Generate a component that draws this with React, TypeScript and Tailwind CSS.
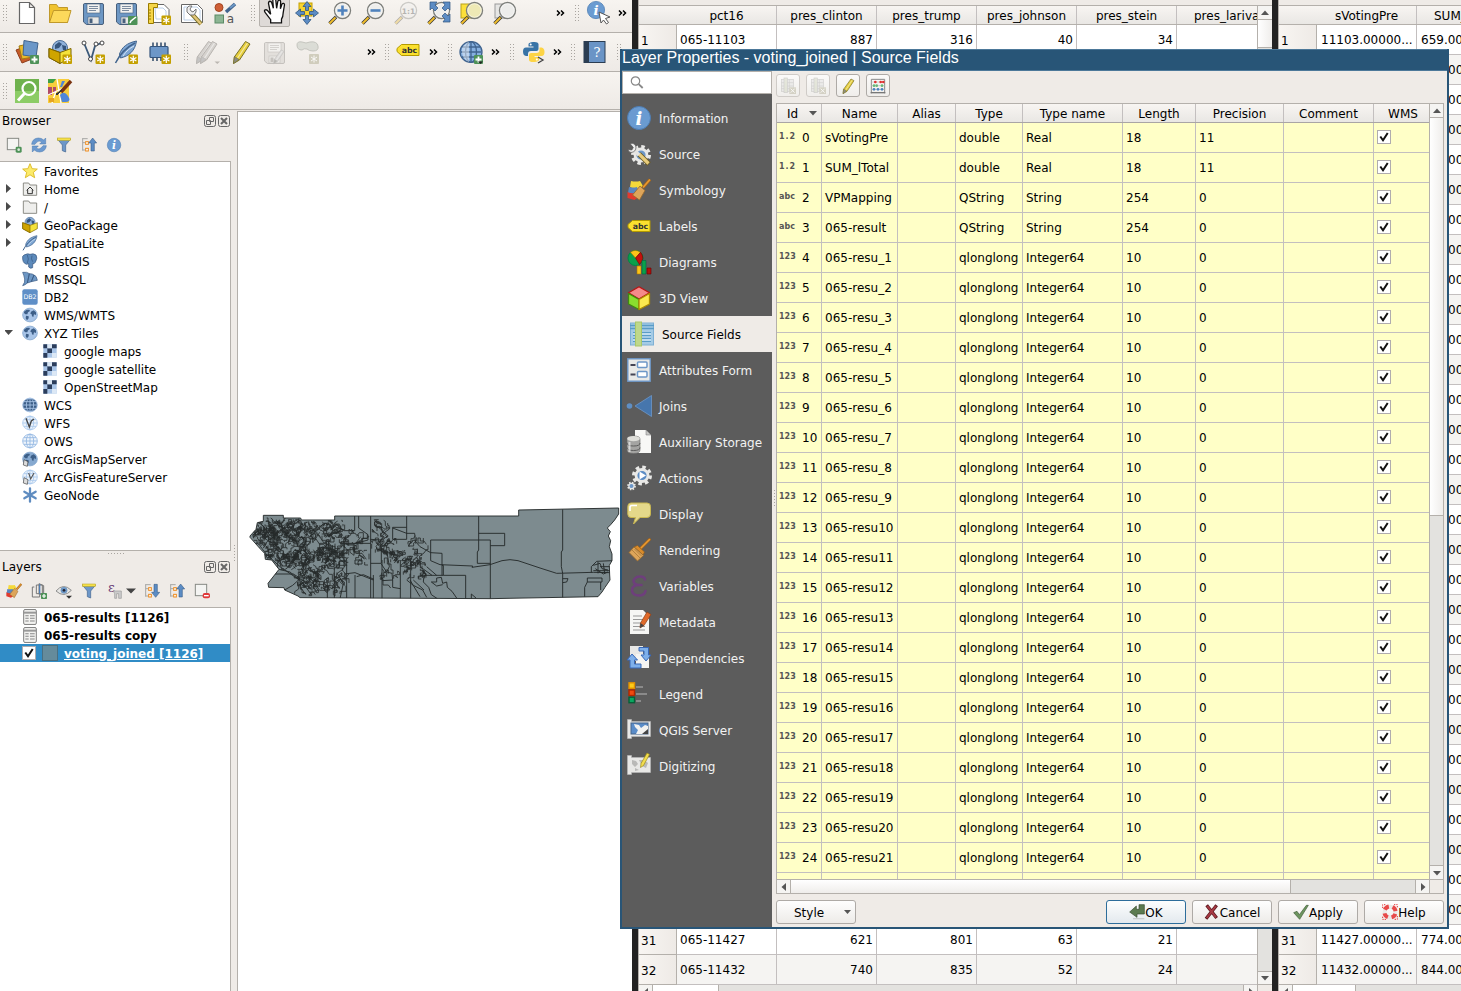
import type { ReactNode } from 'react';

/* ---------- shared drawing helpers ---------- */

function Ic({ s = 24, vb = '0 0 24 24', children }: { s?: number; vb?: string; children: ReactNode }) {
  return (
    <svg width={s} height={s} viewBox={vb} className="block shrink-0 overflow-visible" fill="none">
      {children}
    </svg>
  );
}

const Badge = () => (
  <g>
    <rect x="14.500" y="14.500" width="9.500" height="9.500" rx="1" fill="#c4a000" />
    <path d="M19.300 15.700v7.200M16.200 17.500l6.200 3.600M22.400 17.500l-6.200 3.600" stroke="#fff" strokeWidth="1.200" />
  </g>
);
const PlusBadge = () => (
  <g>
    <rect x="15" y="15" width="9" height="9" rx="1" fill="#4e9258" />
    <path d="M19.500 16.500v6M16.500 19.500h6" stroke="#fff" strokeWidth="1.800" />
  </g>
);
const Lens = ({ fill = '#eeeeec' }: { fill?: string }) => (
  <g>
    <path d="M8 16L1.500 22.500" stroke="#333" strokeWidth="3.400" />
    <path d="M7.500 16.500L1.500 22.500" stroke="#f0bd2c" strokeWidth="2" />
    <circle cx="14.500" cy="9.500" r="8" fill={fill} stroke="#7d7f7b" strokeWidth="1.400" />
    <circle cx="14.500" cy="9.500" r="6.800" stroke="#fff" strokeOpacity=".7" strokeWidth=".8" />
  </g>
);
const Floppy = ({ c = '#6d97c4', d = '#48607c' }: { c?: string; d?: string }) => (
  <g>
    <path d="M3.500 2.500h17.500q1.500 0 1.500 1.500v18q0 1.500-1.500 1.500h-15.500l-3-2.500v-17q0-1.500 1-1.500z" fill={c} stroke={d} />
    <rect x="6" y="3" width="13" height="9" fill="#f2f2f0" stroke={d} strokeWidth=".6" />
    <path d="M8 5.500h9M8 7.500h9M8 9.500h7" stroke={d} strokeWidth="1" strokeOpacity=".7" />
    <rect x="7" y="16" width="11" height="7" fill="#e8e8e6" stroke={d} strokeWidth=".6" />
    <rect x="8.500" y="17.500" width="3" height="4.500" fill={d} />
  </g>
);
const Pencil = ({ c = '#e7cf3c', d = '#77702a', g = '#8b8b85' }: { c?: string; d?: string; g?: string }) => (
  <g>
    <path d="M16.500 1.500l4.500 2.500L10.500 20l-6 3.500.8-6.500z" fill={c} stroke={d} strokeWidth="1" />
    <path d="M18.500 3L8 19" stroke="#fff" strokeOpacity=".55" strokeWidth="1.200" />
    <path d="M5.500 16.500l4.500 3-5.500 4z" fill={g} stroke={d} strokeWidth=".6" />
  </g>
);
const Globe = ({ bg = '#a9c5e8', land = '#3d5f88' }: { bg?: string; land?: string }) => (
  <g>
    <ellipse cx="12" cy="12" rx="11" ry="10.300" fill={bg} stroke="#7fa3cc" strokeWidth="1.200" />
    <path d="M3 7l4-3 4 0 1 2-3 2-1 3-3 0-2-2zM13.500 7l4-2 3.500 3 0 4-3-1-1 4-2-1-.5-3-2-1zM6 13l4 1 0 3-2.500 3-2-3z" fill={land} />
  </g>
);
const WireGlobe = ({ bg = '#eef4fb', c = '#6f9bce', w = 1.3 }: { bg?: string; c?: string; w?: number }) => (
  <g stroke={c} strokeWidth={w}>
    <ellipse cx="12" cy="12" rx="11" ry="10.300" fill={bg} />
    <path d="M12 1.700v20.600M1.500 12h21M3 7h18M3 17h18" />
    <ellipse cx="12" cy="12" rx="5.500" ry="10.300" />
  </g>
);
const Info = () => (
  <g>
    <circle cx="12" cy="12" r="11.500" fill="#6a9bd1" stroke="#4d7db3" />
    <text x="12" y="18.500" textAnchor="middle" fontFamily="DejaVu Serif, serif" fontStyle="italic" fontWeight="700" fontSize="18" fill="#fff">i</text>
  </g>
);
const LabelTag = () => (
  <g>
    <path d="M5.500 6.500h17.500v11H5.500L1 13.500v-3z" fill="#fbe02e" stroke="#b39a00" strokeLinejoin="round" />
    <text x="13.500" y="14.800" textAnchor="middle" fontFamily="DejaVu Sans, sans-serif" fontWeight="700" fontSize="7.800" fill="#333">abc</text>
  </g>
);
const Brush = () => (
  <g>
    <path d="M22.500 1.500L14 10" stroke="#a3631a" strokeWidth="3" strokeLinecap="round" />
    <path d="M22.500 1.500L14 10" stroke="#e89a32" strokeWidth="1.600" strokeLinecap="round" />
    <path d="M10.500 7.500l7 6.500-1.500 3-9-8z" fill="#d98b2b" stroke="#8f5a1a" strokeWidth=".6" />
    <path d="M7 9l9.500 8.500-6 5.500L2 14.500z" fill="#dda55a" stroke="#98682b" strokeWidth=".8" />
    <path d="M5 12l8 8M7.500 11l7 7" stroke="#98682b" strokeWidth=".6" />
  </g>
);
const ColorBrush = () => (
  <g>
    <path d="M4 3q5 1 9 0l3 5-6 4-7-3z" fill="#f5d93a" />
    <path d="M2 9q4 1 8 0l2 5-6 3-5-2z" fill="#5a86c0" />
    <path d="M.5 14q4 2 8 1l3 4-4 3-7-2z" fill="#e23a2e" />
    <path d="M23 1.500l-7 8" stroke="#a3631a" strokeWidth="3.200" />
    <path d="M23 1.500l-7 8" stroke="#e89a32" strokeWidth="1.600" />
    <path d="M13 8l5 4.500-5.500 9.500-7-5z" fill="#dda55a" stroke="#98682b" strokeWidth=".8" />
  </g>
);
const Box = () => (
  <g>
    <circle cx="12" cy="8" r="7.500" fill="#8fb1da" stroke="#4d6f99" />
    <path d="M7 5l4-3 3 2-3 4-4 1zM14 5l4 1 0 4-3 0z" fill="#35557d" />
    <path d="M1 8.500l11 4 11-4v9l-11 6-11-6z" fill="#f4e23a" stroke="#7a6200" />
    <path d="M1 8.500l11 4v11l-11-6z" fill="#cfa400" stroke="#7a6200" />
  </g>
);
const Feather = () => (
  <g>
    <path d="M22.500 1C13 3 8 7 5.500 14l1 4C15 16 21 11 22.500 1z" fill="#7fa7d4" stroke="#41648e" />
    <path d="M21 3C13 7 6 14 1.500 23" stroke="#41648e" strokeWidth="1.500" />
    <path d="M20 6c-4 2-8 5-11 10" stroke="#d6e5f5" strokeWidth="1" />
  </g>
);
const Funnel = () => (
  <g>
    <path d="M2 3h20l-7.500 9v10.500l-5-2V12z" fill="#6d97c8" stroke="#41648e" />
    <rect x="2" y="1.500" width="20" height="3.500" fill="#f5e04a" stroke="#b8a21f" strokeWidth=".8" />
  </g>
);
const Tree = ({ up }: { up?: boolean }) => (
  <g>
    <path d="M2.500 2v18.500M2 2.500h8M2.500 8.500h4M2.500 19.500h4" stroke="#a7a7a5" strokeWidth="1.500" />
    <rect x="7" y="7" width="4" height="4" fill="#fff" stroke="#ee8b1c" strokeWidth="1.500" />
    <rect x="7" y="17" width="4" height="4" fill="#fff" stroke="#ee8b1c" strokeWidth="1.500" />
    <path d={up ? 'M17.500 1.500l6 7.500h-3.500v12h-5V9h-3.500z' : 'M17.500 21.500l6-7.500h-3.500V2h-5v12h-3.500z'} fill="#5c8cc4" stroke="#2f5580" strokeWidth=".8" />
  </g>
);

/* ---------- main toolbars ---------- */

function Dots({ className = '' }: { className?: string }) {
  return (
    <div className={`h-[18px] w-[6px] shrink-0 bg-[radial-gradient(circle,#a9a5a0_0.7px,transparent_0.9px)] bg-[size:3px_3px] ${className}`} />
  );
}
function More({ className = '' }: { className?: string }) {
  return (
    <svg width="9" height="8" viewBox="0 0 9 8" className={`shrink-0 ${className}`} fill="none" stroke="#000" strokeWidth="1.500">
      <path d="M1 1.500l2.500 2.500L1 6.500M5 1.500l2.500 2.500L5 6.500" />
    </svg>
  );
}

const fileIcons: ReactNode[] = [
  <path key="n" d="M4.500 1.500h10l5 5v16h-15zM14.500 1.500v5h5" fill="#fff" stroke="#666" strokeWidth="1.200" />,
  <g key="o"><path d="M1.500 21.500v-18h7l2 3h9v15z" fill="#f0c330" stroke="#c0992a" /><path d="M1.500 21.500l4-12h17.500l-3.500 12z" fill="#fcd95b" stroke="#c0992a" /></g>,
  <Floppy key="s" />,
  <g key="sa"><Floppy /><rect x="14" y="15" width="9.500" height="9" rx="1" fill="#4e9258" /><path d="M16 22l1-2 5-4" stroke="#fff" strokeWidth="1.600" /></g>,
  <g key="l"><path d="M4 3.500h13l5 5v13H4z" fill="#fff" stroke="#666" /><path d="M8 7h8l3 3v8H9z" stroke="#bcd0e8" /><path d="M1.500 2.500h9v4h-4v16h-5z" fill="#f5d548" stroke="#9a7b00" /><path d="M2 9h2M2 12h2M2 15h2M2 18h2" stroke="#9a7b00" /><Badge /></g>,
  <g key="m"><path d="M1.500 3.500h16l5 5v13h-21z" fill="#fff" stroke="#666" /><path d="M4 6h13l3 3v10H4z" stroke="#bcd0e8" /><path d="M11 12l10 11" stroke="#77702a" strokeWidth="4.200" /><path d="M12 13l9 10" stroke="#e3c578" strokeWidth="2.600" /><path d="M12 5l-3 0-2 2 0 4 3 3 4 0 2-3 0-3-3 3-2-1-1-2z" fill="#eee" stroke="#777" /></g>,
  <g key="st"><circle cx="6" cy="6.500" r="4" fill="#cf5f36" stroke="#a34521" /><path d="M22 3l-9 8" stroke="#41648e" strokeWidth="3.500" /><path d="M22 3l-5 4" stroke="#6d97c4" strokeWidth="2" /><rect x="2" y="14" width="8.500" height="8" fill="#8cb593" stroke="#5b8b66" /><text x="17.500" y="22" textAnchor="middle" fontSize="12" fontFamily="DejaVu Sans, sans-serif" fill="#555">a</text></g>,
];

const Hand = () => (
  <path
    d="M8 23v-3L3 13.500q-1.500-2 0-2.500t2.500 1l2.500 3L6 5q0-2 1.300-2t1.700 1.500l1.500 5L10 2.500Q10 .800 11.300.800t1.500 1.700l.700 7 1-6Q14.800 2 16 2t1.200 1.800L17 10l1.300-4q.5-1.400 1.600-1t.8 1.700L19.500 14q0 3-1.500 5.500V23z"
    fill="#fff"
    stroke="#111"
    strokeWidth="1.200"
  />
);

const viewIcons: ReactNode[] = [
  <g key="p"><rect x="4" y="2" width="13" height="13" fill="#f8d42e" stroke="#c4a000" /><path d="M12 .500l4 5h-2.500v4h-3v-4H8zM12 23.500l-4-5h2.500v-4h3v4H16zM.500 12l5-4v2.500h4v3h-4V16zM23.500 12l-5 4v-2.500h-4v-3h4V8z" fill="#5c8cc4" stroke="#2f5580" strokeWidth=".8" /></g>,
  <g key="zi"><Lens /><path d="M14.500 4.500v10M9.500 9.500h10" stroke="#4f82bd" strokeWidth="2.600" /></g>,
  <g key="zo"><Lens /><path d="M9.500 9.500h10" stroke="#4f82bd" strokeWidth="2.600" /></g>,
  <g key="z1" opacity=".35"><Lens /><text x="14.500" y="12.500" textAnchor="middle" fontSize="7.500" fontWeight="700" fontFamily="DejaVu Sans, sans-serif" fill="#444">1:1</text></g>,
  <g key="zf"><Lens /><path d="M3 1h7L8 4l3 3-3 3-3-3-2 2zM23 1h-7l2 3-3 3 3 3 3-3 2 2zM23 21h-7l2-3-3-3 3-3 3 3 2-2z" fill="#5c8cc4" stroke="#2f5580" strokeWidth=".7" /></g>,
  <g key="zs"><rect x="1" y="3" width="12" height="14" fill="#fce03a" stroke="#b8a21f" /><Lens fill="#eee9b5" /></g>,
  <g key="zl"><rect x="2" y="3" width="12" height="14" fill="#e6e6e4" stroke="#999" /><Lens fill="#ededeb" /></g>,
];

const addIcons: ReactNode[] = [
  <g key="a"><path d="M1 10l8-3 8 12-10 4z" fill="#c75b2b" stroke="#8f3f1c" /><path d="M4 6l9-2 5 13-11 2z" fill="#eab92c" stroke="#a37c10" /><path d="M9 .500l14 2.500-2 14-13-2z" fill="#6b97c8" stroke="#41648e" /><PlusBadge /></g>,
  <g key="b"><Box /><Badge /></g>,
  <g key="c"><path d="M3 3l7 17 4-14 6-3" stroke="#3c5a7a" strokeWidth="1.800" /><circle cx="3" cy="3" r="2" fill="#fff" stroke="#444" /><circle cx="15" cy="4" r="2" fill="#fff" stroke="#444" /><circle cx="21" cy="3" r="2" fill="#fff" stroke="#444" /><circle cx="9.500" cy="19" r="2" fill="#fff" stroke="#444" /><Badge /></g>,
  <g key="d"><Feather /><Badge /></g>,
  <g key="e"><path d="M6 6V2.500M10 6V2.500M14 6V2.500M18 6V2.500M6 17v4M10 17v4M14 17v4" stroke="#2c4766" strokeWidth="1.500" /><rect x="3" y="6.500" width="18" height="11" rx="1" fill="#6d97c8" stroke="#35557d" strokeWidth="1.200" /><Badge /></g>,
];

function MainToolbars() {
  const row = 'flex items-center border-b border-[#b4b0ab] bg-gradient-to-b from-[#f7f4f0] to-[#eeeae6]';
  return (
    <div className="shrink-0">
      <div className={`${row} h-[33px] pb-1.5`}>
        <Dots className="ml-[2px]" />
        <div className="ml-[7px] flex gap-[9px]">
          {fileIcons.map((ic, i) => <Ic key={i}>{ic}</Ic>)}
        </div>
        <Dots className="ml-[13px]" />
        <div className="-mt-1 ml-[3px] flex h-[32px] w-[31px] items-center justify-center rounded-[2px] border border-[#b5b1ac] bg-[#dedad7]">
          <Ic s={26}><Hand /></Ic>
        </div>
        <div className="ml-[5px] flex gap-[9px]">
          {viewIcons.map((ic, i) => <Ic key={i}>{ic}</Ic>)}
        </div>
        <More className="ml-[39px]" />
        <Dots className="ml-[9px]" />
        <div className="ml-[7px]">
          <Ic><g transform="scale(.75)"><Info /></g><path d="M12 11l11 5-4.500 1.500 3 4-2 1.500-3-4-2.500 3z" fill="#fff" stroke="#555" /></Ic>
        </div>
        <More className="ml-[7px]" />
      </div>
      <div className={`${row} h-[39px]`}>
        <Dots className="ml-[2px]" />
        <div className="ml-[7px] flex gap-[9px]">
          {addIcons.map((ic, i) => <Ic key={i}>{ic}</Ic>)}
        </div>
        <Dots className="ml-[12px]" />
        <div className="ml-[7px] flex gap-[9px]">
          <Ic><g opacity=".8"><g transform="translate(-4 0)"><Pencil c="#cfccc8" d="#aaa6a2" g="#bbb" /></g><Pencil c="#cfccc8" d="#aaa6a2" g="#bbb" /></g><path d="M18.500 21.500h5.500l-2.700 2.500z" fill="#bbb7b2" /></Ic>
          <Ic><Pencil /></Ic>
          <Ic><g opacity=".55"><Floppy c="#d6d3cf" d="#a29f9b" /><g transform="translate(9 9) scale(.62)"><Pencil c="#ccc" d="#999" /></g></g></Ic>
          <Ic><g opacity=".6"><path d="M2 5q0-4 5-3 4 2 8 0 7-1 8 4t-5 5q-4 0-6-2-3-1-5 1-5 0-5-5z" fill="#ccd0c8" stroke="#a5a8a0" /><rect x="14" y="14" width="10" height="10" rx="1" fill="#bbb8a0" /><path d="M19 15.500v7M16 17l6 4M22 17l-6 4" stroke="#fff" /></g></Ic>
        </div>
        <More className="ml-[48px]" />
        <Dots className="ml-[8px]" />
        <div className="ml-[6px] -mt-1"><Ic><LabelTag /></Ic></div>
        <More className="ml-[9px]" />
        <Dots className="ml-[9px]" />
        <div className="ml-[6px]">
          <Ic>
            <WireGlobe bg="#86b0e0" c="#40648f" />
            <path d="M3 8q3-5 7-6v20q-8-3-7-14z" fill="#fff" opacity=".45" />
            <PlusBadge />
            <path d="M19 21.500h5l-2.500 2.500z" fill="#222" />
          </Ic>
        </div>
        <More className="ml-[8px]" />
        <Dots className="ml-[9px]" />
        <div className="ml-[7px]">
          <Ic>
            <path d="M11 2q5-.500 5.500 2v5q0 2-2 2H9q-3 0-3 3v2H4Q1 15.500 1 11.500T4 7.500h7.500V6.500H6.500V4q.5-1.700 4.500-2z" fill="#3873a6" />
            <path d="M12.500 22q-5 .5-5.500-2v-5q0-2 2-2h5.500q3 0 3-3V7.500h2q3 .5 3 4.500t-3 4H12.500v1H17V20q-.5 1.700-4.500 2z" fill="#fdd445" />
            <circle cx="8.700" cy="4.500" r="1" fill="#fff" />
            <circle cx="14.800" cy="19.500" r="1" fill="#fff" />
            <path d="M16 17l5 3-5 3" stroke="#444" strokeWidth="1.300" />
          </Ic>
        </div>
        <More className="ml-[7px]" />
        <Dots className="ml-[8px]" />
        <div className="ml-[7px]">
          <Ic>
            <rect x="1" y="1.500" width="21" height="21" fill="#6a94c6" stroke="#2b3d52" />
            <rect x="1" y="1.500" width="5" height="21" fill="#2b3d52" />
            <text x="14" y="16.500" textAnchor="middle" fontFamily="DejaVu Serif, serif" fontSize="13" fill="#fff">?</text>
          </Ic>
        </div>
        <Dots className="ml-[9px]" />
      </div>
      <div className={`${row} h-[38px]`}>
        <Dots className="ml-[2px]" />
        <div className="ml-[7px] flex gap-[9px]">
          <Ic>
            <rect width="24" height="24" fill="#6fb24e" />
            <rect y="12" width="24" height="12" fill="#8ccc66" />
            <circle cx="14" cy="9.500" r="6.500" stroke="#fff" strokeWidth="2.200" />
            <path d="M9.500 14.500L3 21.500" stroke="#fff" strokeWidth="3" />
          </Ic>
          <Ic>
            <rect width="21" height="24" fill="#f8ce3c" />
            <path d="M0 0h8l-3 4H0z" fill="#3fa046" />
            <path d="M0 8h4v8H0zM5 8h3v5H5z" fill="#b04a68" />
            <path d="M0 16l20-9M9 0l4 24M4 24L8 12" stroke="#fff" strokeWidth="1.300" />
            <path d="M12 16q4-5 8 1t-3 6h-3zM14 2h3l-3 6h-2z" fill="#4f86d8" />
            <path d="M1 19h5v4H1z" fill="#e6a422" />
            <path d="M23 2L13 13" stroke="#7a3410" strokeWidth="3.400" />
            <path d="M14 11l-6 4 1 1z" fill="#333" stroke="#333" />
          </Ic>
        </div>
      </div>
    </div>
  );
}

/* ---------- docks ---------- */

function DockTitle({ title }: { title: string }) {
  return (
    <div className="flex h-[21px] items-center pl-[2px] pr-[1px]">
      <span className="flex-1">{title}</span>
      <svg width="26" height="12" viewBox="0 0 26 12" fill="none" stroke="#666">
        <rect x=".5" y=".5" width="11" height="11" rx="2" />
        <path d="M5.500 2.500h4v4h-4zM2.500 5.500h4v4h-4z" fill="#efebe7" />
        <rect x="14.500" y=".5" width="11" height="11" rx="2" />
        <path d="M17 3l6 6M23 3l-6 6" strokeWidth="2" />
      </svg>
    </div>
  );
}

const FolderShape = () => <path d="M2 21.500V3h8l2 3h10v15.500z" fill="#eeeeec" stroke="#85857f" strokeWidth="1.400" />;
const TileIcon = () => (
  <g>
    <rect x="2" y="2" width="20" height="20" fill="#a9c5e8" />
    <path d="M2 2h6v6H2zM15 2h7v6h-7zM8 8h7v7H8zM2 15h6v7H2z" fill="#2b3d5b" />
    <path d="M8 2h7v6H8zM15 15h7v7h-7z" fill="#dce8f5" />
  </g>
);
const Star = () => <path d="M12 1l3.200 7.500 7.800.6-6 5 2 8-7-4.400-7 4.400 2-8-6-5 7.800-.6z" fill="#fceb6a" stroke="#d9b51c" strokeWidth="1.300" />;

type Node = { t: string; ic: ReactNode; arrow?: 'r' | 'd'; sub?: boolean };
const nodes: Node[] = [
  { t: 'Favorites', ic: <Star /> },
  { t: 'Home', arrow: 'r', ic: <g><FolderShape /><path d="M7 14l5-5 5 5M8.500 13v6h7v-6" stroke="#333" strokeWidth="1.500" /></g> },
  { t: '/', arrow: 'r', ic: <FolderShape /> },
  { t: 'GeoPackage', arrow: 'r', ic: <Box /> },
  { t: 'SpatiaLite', arrow: 'r', ic: <Feather /> },
  { t: 'PostGIS', ic: <g><path d="M3 3q6-3 9-1 5-2 9 1 3 4-1 11l-2 2h-2l0 6q-4 2-6-1v-5l-3 1Q0 15 1 5z" fill="#5c8abb" stroke="#35557d" /><path d="M8 3q3 6 0 12M15 4q-2 5 1 9" stroke="#35557d" /></g> },
  { t: 'MSSQL', ic: <g><path d="M1 2q7-1 10 2l-3 14q-3 3-7 4 4-5 3-10T1 2zM11 4q5 0 7 2l-4 10-6 2zM18 6q4 1 5 8l-9 2z" fill="#6d97c4" stroke="#35557d" /></g> },
  { t: 'DB2', ic: <g><rect x=".5" y=".5" width="23" height="23" rx="3" fill="#5f8fc7" /><text x="12" y="15.500" textAnchor="middle" fontSize="9.500" fontFamily="DejaVu Sans, sans-serif" fill="#fff">DB2</text></g> },
  { t: 'WMS/WMTS', ic: <Globe /> },
  { t: 'XYZ Tiles', arrow: 'd', ic: <Globe /> },
  { t: 'google maps', sub: true, ic: <TileIcon /> },
  { t: 'google satellite', sub: true, ic: <TileIcon /> },
  { t: 'OpenStreetMap', sub: true, ic: <TileIcon /> },
  { t: 'WCS', ic: <WireGlobe bg="#3d5f88" c="#a9c5e8" /> },
  { t: 'WFS', ic: <g><WireGlobe c="#a9c8ec" /><path d="M6 5l5 13 3-9 4-3" stroke="#444" strokeWidth="2" /></g> },
  { t: 'OWS', ic: <WireGlobe c="#93b7e2" /> },
  { t: 'ArcGisMapServer', ic: <g><Globe bg="#86a9d0" /><path d="M3 13l6 3-1 7-6-2z" fill="#ddd" stroke="#444" /></g> },
  { t: 'ArcGisFeatureServer', ic: <g><WireGlobe c="#a9c8ec" /><path d="M10 6l3 9 5-9" stroke="#555" strokeWidth="1.600" /><path d="M3 13l6 3-1 7-6-2z" fill="#ddd" stroke="#444" /></g> },
  { t: 'GeoNode', ic: <g stroke="#5f8cc0" strokeWidth="3.400" strokeLinecap="round"><path d="M12 2v20M3.500 7l17 10M20.500 7l-17 10" /></g> },
];

const browserTools: ReactNode[] = [
  <g key="1"><rect x="2" y="2" width="17" height="17" fill="#f4f4f2" stroke="#888a85" strokeWidth="1.500" /><rect x="14.500" y="14.500" width="9" height="9" rx="2" fill="#4e9258" /><circle cx="19" cy="19" r="2" fill="#d8ead9" /></g>,
  <g key="2"><path d="M1 11Q2 2 11 1.500q5 0 8 3L22 1.500V10.500H13l3-3q-5-4-10 3.500zM23 13q-1 9-10 9.500-5 0-8-3L2 22.500V13.500h9l-3 3q5 4 10-3.500z" fill="#6d9ad0" stroke="#4878b0" strokeWidth=".8" /></g>,
  <Funnel key="3" />,
  <Tree key="4" up />,
  <g key="5" transform="translate(1.500 1.500) scale(.88)"><Info /></g>,
];

function Docks() {
  return (
    <div className="flex w-[231px] shrink-0 flex-col">
      <DockTitle title="Browser" />
      <div className="flex h-[30px] items-center gap-[9px] pb-[2px] pl-[6px]">
        {browserTools.map((ic, i) => <Ic key={i} s={16}>{ic}</Ic>)}
      </div>
      <div className="h-[390px] border-y border-r border-[#b4b0ab] bg-white">
        {nodes.map((n) => (
          <div key={n.t} className={`flex h-[18px] items-center ${n.sub ? 'pl-[42px]' : 'pl-[5px]'}`}>
            {!n.sub && (
              <svg width="17" height="9" viewBox="0 0 17 9" className="-mt-0.5 shrink-0" fill="#4a4a4a">
                {n.arrow === 'r' && <path d="M1 0l5 4.500-5 4.500z" />}
                {n.arrow === 'd' && <path d="M-1 2h9l-4.500 5z" />}
              </svg>
            )}
            <Ic s={16}>{n.ic}</Ic>
            <span className="ml-[6px] pt-[2px]">{n.t}</span>
          </div>
        ))}
      </div>
      <div className="flex h-[5px] items-center justify-center">
        <div className="h-[3px] w-[18px] bg-[radial-gradient(circle,#a9a5a0_0.7px,transparent_0.9px)] bg-[size:3px_3px]" />
      </div>
      <DockTitle title="Layers" />
      <div className="flex h-[30px] items-center gap-[9px] pb-[2px] pl-[6px]">
        <Ic s={16}><ColorBrush /></Ic>
        <Ic s={16}><g><path d="M8 3h9v13H8zM5 6H2v15h11v-3" stroke="#777" strokeWidth="1.500" /><path d="M12 1l7 3v13h-7z" stroke="#777" strokeWidth="1.500" /><path d="M13 2v14" stroke="#4d7db3" strokeWidth="2" /><rect x="15" y="15" width="9" height="9" rx="1" fill="#4e9258" /><path d="M19.500 16.500v6M16.500 19.500h6" stroke="#fff" strokeWidth="1.800" /></g></Ic>
        <Ic s={16}><g><path d="M0 12q11-13 23-1-11 12-23 1z" fill="#e6e6e4" stroke="#888" strokeWidth="1.400" /><circle cx="12" cy="11" r="5" fill="#6d97c4" /><circle cx="12" cy="11" r="2" fill="#223" /><path d="M15 19h9l-4.500 4.500z" fill="#333" /></g></Ic>
        <Ic s={16}><Funnel /></Ic>
        <div className="flex items-center gap-[4px]">
          <Ic s={16}><g><text x="8" y="14" textAnchor="middle" fontFamily="DejaVu Serif, serif" fontSize="20" fill="#6b3f78">ε</text><path d="M11 12h12v11h-4v-7h-3v7h-3v-7z" fill="#ccc" stroke="#999" /></g></Ic>
          <svg width="10" height="6" viewBox="0 0 10 6" fill="#444"><path d="M0 .5h10l-5 5z" /></svg>
        </div>
        <div className="-ml-[1px]"><Ic s={16}><Tree /></Ic></div>
        <Ic s={16}><Tree up /></Ic>
        <Ic s={16}><g><rect x="2" y="2" width="17" height="17" fill="#f4f4f2" stroke="#888a85" strokeWidth="1.500" /><rect x="13" y="15" width="11" height="8" rx="3" fill="#e0393a" /><path d="M15 19h7" stroke="#fff" strokeWidth="2" /></g></Ic>
      </div>
      <div className="flex-1 border-r border-t border-[#b4b0ab] bg-white font-bold">
        {['065-results [1126]', '065-results copy'].map((t) => (
          <div key={t} className="flex h-[18px] items-center pl-[22px]">
            <Ic s={16}><g><rect x="2.500" y=".8" width="19" height="22.400" rx="2" fill="#f2f2f0" stroke="#777" strokeWidth="1.400" /><path d="M3 5.500h18" stroke="#999" strokeWidth="3" /><path d="M5 10h5M5 14h5M5 18h5M12 10h7M12 14h7M12 18h7" stroke="#888" strokeWidth="1.600" /></g></Ic>
            <span className="ml-[6px] pt-[2px]">{t}</span>
          </div>
        ))}
        <div className="flex h-[18px] items-center bg-[#308cc6] pl-[22px] text-white">
          <Check />
          <div className="ml-[6px] h-[16px] w-[16px] border border-[#4a6f80] bg-[#658b9b]" />
          <span className="ml-[6px] pt-[2px] underline">voting_joined [1126]</span>
        </div>
      </div>
    </div>
  );
}

function Check() {
  return (
    <svg width="14" height="14" viewBox="0 0 14 14" className="block shrink-0">
      <rect x=".5" y=".5" width="13" height="13" fill="#fff" stroke="#b0acae" />
      <path d="M3.300 6.500L6 10.300 10.700 3" fill="none" stroke="#111" strokeWidth="2" />
    </svg>
  );
}

/* ---------- map ---------- */

function makeRandom(seed: number) {
  let s = seed;
  return () => {
    s = (s * 1664525 + 1013904223) % 4294967296;
    return s / 4294967296;
  };
}

/* Precinct boundaries: staircase walks, packed per zone [x, y, w, h, walks, step]. */
const zones: number[][] = [
  [50, 50, 130, 70, 60, 8],
  [36, 85, 80, 60, 34, 8],
  [120, 62, 180, 50, 60, 8],
  [70, 110, 130, 70, 44, 10],
  [110, 150, 100, 60, 44, 8],
  [60, 60, 270, 150, 80, 15],
  [230, 140, 80, 50, 34, 8],
  [160, 190, 170, 100, 42, 14],
  [170, 205, 70, 80, 40, 8],
  [300, 66, 90, 120, 16, 15],
  [250, 60, 60, 60, 20, 8],
  [340, 150, 50, 50, 6, 9],
  [390, 56, 60, 90, 16, 11],
  [405, 110, 65, 60, 26, 8],
  [450, 150, 95, 50, 34, 8],
  [500, 100, 70, 90, 8, 13],
  [420, 160, 60, 110, 12, 15],
  [490, 180, 70, 60, 18, 10],
];
const precinctPath = (() => {
  const r = makeRandom(65);
  let d = '';
  for (const [x, y, w, h, n, step] of zones) {
    for (let i = 0; i < n; i++) {
      let px = x + r() * w;
      let py = y + r() * h;
      const sx = r() < 0.5 ? -1 : 1;
      const sy = r() < 0.5 ? -1 : 1;
      d += `M${px.toFixed(0)} ${py.toFixed(0)}`;
      for (let k = 0; k < 7; k++) {
        const len = (0.3 + r()) * step * (r() < 0.2 ? -1 : 1);
        const skew = r() < 0.3 ? len * 0.7 : 0;
        if (k % 2) {
          px += len * sx;
          py += skew * sy;
        } else {
          py += len * sy;
          px += skew * sx;
        }
        if (px < x || px > x + w || py < y || py > y + h) break;
        d += `L${px.toFixed(0)} ${py.toFixed(0)}`;
      }
    }
  }
  return d;
})();

const outline =
  'M30 108L48 88 52 68 70 64 70 46 130 46 130 54 182 54 184 60 284 60 284 48 836 48 836 30 1136 24 1136 42 1124 60 1112 74 1102 84 1111 95 1105 108 1112 122 1108 140 1116 162 1116 182 1108 196 1109 225 1110 240 1095 262 1086 276 1074 290 750 296 180 293 174 288 134 270 132 263 86 262 84 250 117 208 95 180 76 178 74 160 62 148 30 112Z';

function CountyMap() {
  return (
    <svg width="390" height="110" viewBox="0 0 1170 330" className="ml-[2px] mt-[388px] block" fill="none" stroke="#262b2b" strokeWidth="2.800">
      <defs>
        <clipPath id="county"><path d={outline} /></clipPath>
      </defs>
      <path d={outline} fill="#7d8b8f" />
      <g clipPath="url(#county)">
        <path d={precinctPath} strokeWidth="2.500" />
        <path d="M500 48V118M458 82H500M458 82V118H500M392 48V296M356 48V84L384 104V120L340 132H312V200M344 48V92H312L284 70M392 118L424 120M392 190H424V140M300 130H392M458 84L500 100 510 100H524L526 124 540 140 572 158 606 160V226" />
        <path d="M572 182V120H751V296M716 48V150L712 156V190H751M716 100H794V137H751M572 182L600 194 698 198 696 202 750 194 786 182Q810 176 834 182L900 204 950 220 1060 217 1112 218M968 28V150L964 156 964 200 968 220V295" />
        <path d="M606 196H610V226H677V296M552 226H610M500 240L520 256 548 270 560 292M552 226L550 246 566 262 574 284 592 296M574 246H590V234L604 232 608 250 620 246 622 262 636 274 650 294M574 246L590 258 608 254M540 200L576 226M560 200L590 226M512 180V296M481 180V296M458 240V262L481 266M426 180V296M400 225V296M345 225V296M320 180V296M312 222L345 218 400 240M424 192L440 216 456 220 458 240 426 242M290 218L310 250 300 296M283 200V296M262 240V296M345 180H366V192H345ZM350 230L370 224 402 238M510 240L540 290M520 240L552 270M440 150L448 200 440 216" />
        <path d="M104 222H160L176 232 214 284M134 270L158 256 180 236M117 208L150 216 178 240M76 160L120 200 178 240M694 282L708 294M694 282V296M968 236L984 236 980 246 968 248M1054 218V200L1070 184 1116 182M1060 196L1080 190 1086 206 1104 210M1066 206L1090 222 1104 216M1074 186V220M1042 234H1086V246H1042ZM1042 246L1034 262V290M1082 246V270M1090 190L1094 220M1080 200H1110M1060 212H1108" />
      </g>
    </svg>
  );
}

/* ---------- scroll bar parts ---------- */

function Arrow({ dir }: { dir: 'up' | 'down' | 'left' | 'right' }) {
  const d = { up: 'M0 6l4-4.500L8 6z', down: 'M0 2l4 4.500L8 2z', left: 'M6 0L1.500 4 6 8z', right: 'M2 0l4.500 4L2 8z' }[dir];
  return <svg width="8" height="8" viewBox="0 0 8 8" className="block shrink-0"><path d={d} fill="#555" /></svg>;
}
function ArrowBtn({ dir, className }: { dir: 'up' | 'down' | 'left' | 'right'; className: string }) {
  return <div className={`flex shrink-0 items-center justify-center bg-[#f5f4f2] border-[#b4b0ab] ${className}`}><Arrow dir={dir} /></div>;
}

/* ---------- attribute tables behind the dialog ---------- */

const headGrad = 'bg-gradient-to-b from-[#f8f5f2] to-[#e9e7e4]';
const rowHead = 'w-[38px] shrink-0 border-b border-r border-[#b4b0ab] bg-gradient-to-r from-[#f8f5f2] to-[#eeeae6] pl-[2px] pt-[9px]';

function VotesTable() {
  const heads = ['pct16', 'pres_clinton', 'pres_trump', 'pres_johnson', 'pres_stein'];
  const rows: [number, string[]][] = [
    [1, ['065-11103', '887', '316', '40', '34']],
    [31, ['065-11427', '621', '801', '63', '21']],
    [32, ['065-11432', '740', '835', '52', '24']],
  ];
  const line = ([n, cells]: [number, string[]]) => (
    <div key={n} className={`flex h-[30px] shrink-0 ${n % 2 ? 'bg-white' : 'bg-[#f5f4f2]'}`}>
      <div className={rowHead}>{n}</div>
      {cells.map((c, i) => (
        <div key={i} className={`w-[100px] shrink-0 border-b border-r border-[#c3bfbf] pt-[8px] ${i ? 'pr-[3px] text-right' : 'pl-[3px]'}`}>{c}</div>
      ))}
      <div className="flex-1 border-b border-[#c3bfbf]" />
    </div>
  );
  return (
    <div className="flex w-[634px] shrink-0 flex-col border-l border-[#b4b0ab]">
      <div className="h-[5px] shrink-0" />
      <div className="flex h-[980px] shrink-0 border-t border-[#b4b0ab]">
        <div className="flex w-[618px] flex-col overflow-hidden">
          <div className={`flex h-[19px] shrink-0 border-b border-[#b4b0ab] ${headGrad}`}>
            <div className="w-[38px] shrink-0" />
            {heads.map((h) => (
              <div key={h} className="flex w-[100px] shrink-0 items-center justify-center border-r border-[#c3bfbf] pt-[2px]">{h}</div>
            ))}
            <div className="flex items-center whitespace-nowrap pl-[17px] pt-[2px]">pres_lariva</div>
          </div>
          {line(rows[0])}
          <div className="h-[870px] shrink-0" />
          {line(rows[1])}
          {line(rows[2])}
        </div>
        <div className="flex flex-1 flex-col border-l border-[#b4b0ab]">
          <ArrowBtn dir="up" className="h-[14px] border-b" />
          <div className="h-[28px] border-b border-[#b4b0ab] bg-gradient-to-r from-white to-[#efedeb]" />
          <div className="flex-1 bg-[#e3e2df]" />
          <ArrowBtn dir="down" className="h-[14px] border-y" />
        </div>
      </div>
      <div className="flex h-[14px] shrink-0 bg-[#e3e2df]">
        <ArrowBtn dir="left" className="w-[14px] border-r" />
        <div className="w-[66px] border-r border-[#b4b0ab] bg-white" />
        <div className="flex-1" />
        <ArrowBtn dir="right" className="w-[15px] border-x" />
        <div className="w-[14px] bg-[#efebe7]" />
      </div>
    </div>
  );
}

function PrecinctTable() {
  const ids: Record<number, [string, string]> = {
    1: ['11103.00000...', '659.00000...'],
    31: ['11427.00000...', '774.00000...'],
    32: ['11432.00000...', '844.00000...'],
  };
  return (
    <div className="flex min-w-0 flex-1 flex-col overflow-hidden border-l border-[#b4b0ab]">
      <div className="h-[5px] shrink-0" />
      <div className={`flex h-[20px] shrink-0 border-y border-[#b4b0ab] ${headGrad}`}>
        <div className="w-[38px] shrink-0" />
        <div className="flex w-[100px] shrink-0 items-center justify-center border-r border-[#c3bfbf] pt-[2px]">sVotingPre</div>
        <div className="flex shrink-0 items-center whitespace-nowrap pl-[17px] pt-[2px]">SUM_lTotal</div>
      </div>
      {Array.from({ length: 32 }, (_, i) => i + 1).map((n) => (
        <div key={n} className={`flex h-[30px] shrink-0 ${n % 2 ? 'bg-white' : 'bg-[#f5f4f2]'}`}>
          <div className={rowHead}>{n}</div>
          <div className="w-[100px] shrink-0 whitespace-nowrap border-b border-r border-[#c3bfbf] pl-[4px] pt-[8px]">
            {ids[n] ? ids[n][0] : ''}
          </div>
          <div className="w-[100px] shrink-0 whitespace-nowrap border-b border-[#c3bfbf] pl-[4px] pt-[8px]">
            {ids[n] ? ids[n][1] : <span className="pl-[27px]">00000...</span>}
          </div>
        </div>
      ))}
      <div className="flex h-[14px] shrink-0 bg-[#e3e2df]">
        <ArrowBtn dir="left" className="w-[14px] border-r" />
        <div className="w-[63px] border-r border-[#b4b0ab] bg-white" />
      </div>
    </div>
  );
}

/* ---------- layer properties dialog ---------- */

const Gear = ({ cx, cy, r, f }: { cx: number; cy: number; r: number; f: string }) => (
  <g>
    <circle cx={cx} cy={cy} r={r} stroke="#e8e8e6" strokeWidth={r * 0.5} strokeDasharray={`${r * 0.42} ${r * 0.365}`} />
    <circle cx={cx} cy={cy} r={r * 0.75} fill={f} stroke="#e8e8e6" strokeWidth={r * 0.35} />
  </g>
);
const MapSheet = () => <path d="M.5 2.500h4v2h19v15h-19v2h-4z" fill="#e8e8e6" stroke="#bbb" strokeWidth=".6" />;

const sections: [string, ReactNode][] = [
  ['Information', <Info key="i" />],
  ['Source', <g key="s"><Gear cx={14} cy={13} r={8} f="#6d97c8" /><path d="M12 12l10 10" stroke="#6a5a20" strokeWidth="5" /><path d="M12 12l9.500 9.500" stroke="#e8cc7c" strokeWidth="3.200" /><path d="M7 8l5 5" stroke="#e4e4e2" strokeWidth="3.600" /><path d="M3 1.500q5-1 6 3.500 0 5-5 5.500Q1.500 10 .8 7.500l4 .5 1.500-2.500z" fill="#eee" stroke="#555" strokeWidth=".7" /></g>],
  ['Symbology', <ColorBrush key="c" />],
  ['Labels', <LabelTag key="l" />],
  ['Diagrams', <g key="d"><circle cx="8.500" cy="8" r="7.500" fill="#0aa04b" stroke="#084" /><path d="M8.500 8L3.500 2.300Q8-1.500 13.500 2.300z" fill="#fcc419" stroke="#a47b00" strokeWidth=".6" /><path d="M8.500 8l5-5.700q5 6-1 12.200z" fill="#c4110d" stroke="#700" strokeWidth=".6" /><path d="M10 16h4v8h-4z" fill="#fcc419" stroke="#b07a00" strokeWidth=".6" /><path d="M15 10.500h4V24h-4z" fill="#0aa04b" stroke="#064" strokeWidth=".6" /><path d="M20 18h4v6h-4z" fill="#b40f0b" stroke="#600" strokeWidth=".6" /></g>],
  ['3D View', <g key="v" strokeWidth="1.300" strokeLinejoin="round"><path d="M12 .8l10.500 6L12 13 1.500 6.800z" fill="#f58a8a" stroke="#b81414" /><path d="M1.500 7.500L12 13.500v10L1.500 18z" fill="#8ade2e" stroke="#3f8a10" /><path d="M22.500 7.500L12 13.500v10L22.500 18z" fill="#fce94f" stroke="#b08d00" /></g>],
  ['Source Fields', <g key="f"><rect x=".5" y="1" width="23" height="22" fill="#a5cbe6" stroke="#7fb0d4" /><path d="M0 3.500h24M0 6.500h24" stroke="#5a9cc8" strokeWidth="1.600" /><path d="M3 10.500h18M3 13.500h18M3 16.500h18M3 19.500h18" stroke="#5a9cc8" /><path d="M3 12h18M3 18h18" stroke="#d9edf8" /><rect x="5.500" y="0" width="6" height="24" fill="#bfd88a" stroke="#a9c76a" /></g>],
  ['Attributes Form', <g key="a"><rect x=".8" y=".8" width="22.400" height="22.400" fill="#e9e9e7" stroke="#6d97c8" strokeWidth="1.400" /><path d="M3.500 7h5M3.500 16.500h5" stroke="#445" strokeWidth="1.800" /><rect x="10.500" y="4" width="9.500" height="5.500" rx="1" fill="#fff" stroke="#6d97c8" strokeWidth="1.500" /><rect x="10.500" y="13.500" width="9.500" height="5.500" rx="1" fill="#fff" stroke="#6d97c8" strokeWidth="1.500" /></g>],
  ['Joins', <g key="j"><circle cx="2.500" cy="12" r="2.800" fill="#5f8fc4" /><path d="M8 12L24.500 1.500v21z" fill="#4676ad" stroke="#6d97c8" strokeWidth=".8" /></g>],
  ['Auxiliary Storage', <g key="x"><path d="M8 0h11l5 5v18H8z" fill="#f8f8f6" /><path d="M19 0l5 5h-5z" fill="#c8c8c6" stroke="#777" strokeWidth=".5" /><path d="M0 9q0-3 6.500-3t6.500 3v11q0 3.500-6.500 3.500T0 20z" fill="#a4a4a2" stroke="#666" strokeWidth=".6" /><path d="M0 13q0 3 6.500 3t6.500-3M0 17.500q0 3 6.500 3t6.500-3" stroke="#555" strokeWidth=".9" /><ellipse cx="6.500" cy="8.700" rx="6.300" ry="2.600" fill="#deded9" /><path d="M2.500 12v10" stroke="#eee" strokeWidth="2" strokeOpacity=".7" /></g>],
  ['Actions', <g key="t"><Gear cx={15} cy={9.500} r={8} f="#5c8cc4" /><path d="M12.500 5.500l6.500 4-6.500 4z" fill="#fff" /><Gear cx={4.500} cy={20} r={3.500} f="#6d97c8" /></g>],
  ['Display', <g key="y"><path d="M4 1h16q3.500 0 3.500 3.500V12q0 3.500-3.500 3.500h-7L6.500 22l2-6.500H4Q.8 15.500.8 12V4.500Q.8 1 4 1z" fill="#e4d88a" stroke="#c9b750" /><path d="M3 9V5.500q0-2 2-2h5" stroke="#fff" strokeWidth="1.600" /></g>],
  ['Rendering', <Brush key="r" />],
  ['Variables', <path key="e" d="M18 5.500Q17.500 2.500 13 2.500T6.500 6.500Q6.500 10.800 12 11 5 11.300 5 16.200 5.200 21.300 12 21.500q5.500 0 6.500-4.500M12 11h2.500" stroke="#6e3f7c" strokeWidth="2.600" strokeLinecap="round" />],
  ['Metadata', <g key="m"><path d="M3 0h13l6 6v18H3z" fill="#f6f6f4" /><path d="M6 6h9M6 9.500h12M6 13h12M6 16.500h12M6 20h12" stroke="#999" /><path d="M20 2l4 2.500-7 11-4 2.500.5-5z" fill="#e06a2a" stroke="#8f3f14" strokeWidth=".7" /><path d="M13.500 13l3.500 2.500-4 2.500z" fill="#444" /></g>],
  ['Dependencies', <g key="p"><rect x="3" y="0" width="13" height="15" fill="#e8e8e6" /><rect x="9" y="8" width="13" height="14" fill="#f4f4f2" /><path d="M5 8l5.500 6H7.500v4H14v4H3v-8H0z" fill="#7fb0ea" stroke="#3868b8" /><path d="M19 15l-5-6h3V5h-5V1.500h9.500V9H24z" fill="#7fb0ea" stroke="#3868b8" /></g>],
  ['Legend', <g key="g"><rect x="2" y="0.800" width="5.500" height="5.500" fill="#fccb19" stroke="#e09000" strokeWidth="1.400" /><rect x="2" y="8" width="5.500" height="5.500" fill="#f04a10" stroke="#b02800" strokeWidth="1.400" /><rect x="2" y="15.200" width="5.500" height="5.500" fill="#0aa860" stroke="#065f38" strokeWidth="1.400" /><path d="M9 5h7M9 12h11M9 19h5" stroke="#999" strokeWidth="1.600" /></g>],
  ['QGIS Server', <g key="q" transform="translate(0 -1)"><MapSheet /><rect x="4" y="6" width="17" height="11" fill="#5a8cc8" stroke="#46648a" /><path d="M7 7l5 1 2 3 4-3 3 1v4l-4 4H9l2-4-3-3z" fill="#f2f2f0" /><path d="M21 12l-6 5h6z" fill="#444" /></g>],
  ['Digitizing', <g key="z" transform="translate(0 -1)"><MapSheet /><path d="M5 7l4 1 2 3-3 3-3-3zM12 7l5 0 4 3-2 5-4-2zM8 15l4 2-4 1z" fill="#b9b9b7" /><path d="M20 0l2.500 1.500-6 11-3 2 .5-4z" fill="#f2dd4e" stroke="#9a8a1c" strokeWidth=".7" /></g>],
];

const cols: [string, string][] = [
  ['Name', 'w-[76px]'],
  ['Alias', 'w-[58px]'],
  ['Type', 'w-[67px]'],
  ['Type name', 'w-[100px]'],
  ['Length', 'w-[73px]'],
  ['Precision', 'w-[88px]'],
  ['Comment', 'w-[90px]'],
];

type Field = { kind: string; cells: string[] };
const fields: Field[] = [
  { kind: '1.2', cells: ['sVotingPre', '', 'double', 'Real', '18', '11', ''] },
  { kind: '1.2', cells: ['SUM_lTotal', '', 'double', 'Real', '18', '11', ''] },
  { kind: 'abc', cells: ['VPMapping', '', 'QString', 'String', '254', '0', ''] },
  { kind: 'abc', cells: ['065-result', '', 'QString', 'String', '254', '0', ''] },
  ...Array.from({ length: 21 }, (_, i) => ({
    kind: '123',
    cells: [i < 9 ? `065-resu_${i + 1}` : `065-resu${i + 1}`, '', 'qlonglong', 'Integer64', '10', '0', ''],
  })),
];

function ToolBtn({ off, children }: { off?: boolean; children: ReactNode }) {
  return (
    <div className={`flex h-[23px] w-[24px] items-center justify-center rounded-[3px] border bg-gradient-to-b from-[#fbfaf9] to-[#f0eeeb] ${off ? 'border-[#cfcbc7]' : 'border-[#aeaaa6]'}`}>
      <div className={off ? 'opacity-40' : ''}><Ic s={16}>{children}</Ic></div>
    </div>
  );
}

function PushBtn({ label, main, children }: { label: string; main?: boolean; children: ReactNode }) {
  return (
    <div className={`flex h-[24px] w-[80px] items-center justify-center rounded-[3px] border bg-gradient-to-b ${main ? 'border-[#2d6d9b] from-[#fdfefe] to-[#e3e9ee]' : 'border-[#aeaaa6] from-[#fefefe] to-[#edebe8]'}`}>
      <Ic s={16}>{children}</Ic>
      <span className="pt-[2px]">{label}</span>
    </div>
  );
}

const TableGlyph = () => (
  <g><rect x="2" y="2" width="18" height="18" fill="#ddd" stroke="#999" /><path d="M2 7h18M2 12h18M2 16h18M14 2v18" stroke="#999" /><rect x="6" y="0" width="5" height="22" fill="#c9cfb5" stroke="#999" /><rect x="14" y="14" width="10" height="10" fill="#aaa68a" /><path d="M16 16l6 6M22 16l-6 6" stroke="#fff" strokeWidth="1.500" /></g>
);

function Dialog() {
  return (
    <div className="absolute left-[620px] top-[49px] flex h-[880px] w-[829px] flex-col border-x-2 border-b-2 border-[#285577] bg-[#efebe7]">
      <div className="h-[22px] shrink-0 whitespace-nowrap border-y border-[#4c7899] bg-[#285577] font-['Liberation_Sans',Arial,sans-serif] text-[16px] leading-[15px] text-white">
        Layer Properties - voting_joined | Source Fields
      </div>
      <div className="flex min-h-0 flex-1">
        <div className="flex w-[150px] shrink-0 flex-col bg-[#5c5c5c]">
          <div className="flex h-[23px] shrink-0 items-center border border-[#b4b0ab] bg-white pl-[7px]">
            <svg width="14" height="14" viewBox="0 0 14 14" fill="none" stroke="#888" strokeWidth="1.200">
              <circle cx="5.500" cy="5" r="4.200" />
              <path d="M8.700 8.200l4 3.800" strokeWidth="1.800" />
            </svg>
          </div>
          <div className="pt-[6px]">
            {sections.map(([name, icon]) => (
              <div
                key={name}
                className={`flex h-[36px] items-center gap-[8px] whitespace-nowrap ${name === 'Source Fields' ? 'bg-[#efebe7] pl-[8px] text-black' : 'pl-[5px] text-[#f2f2f2]'}`}
              >
                <Ic>{icon}</Ic>
                <span className="pt-[2px]">{name}</span>
              </div>
            ))}
          </div>
        </div>
        <div className="flex w-[4px] items-center justify-center pb-0.5">
          <div className="h-[18px] w-[3px] bg-[radial-gradient(circle,#a9a5a0_0.7px,transparent_0.9px)] bg-[size:3px_3px]" />
        </div>
        <div className="flex w-[668px] flex-col">
          <div className="flex h-[32px] shrink-0 gap-[6px] pt-[3px]">
            <ToolBtn off><TableGlyph /></ToolBtn>
            <ToolBtn off><TableGlyph /></ToolBtn>
            <ToolBtn><Pencil /></ToolBtn>
            <ToolBtn>
              <path d="M2 23V2h20V23" stroke="#888" strokeWidth="1.500" />
              <path d="M1 22h22" stroke="#777" strokeWidth="2" />
              <path d="M2 6h20M2 11.500h20M2 17h20" stroke="#bbb" />
              <g><circle cx="8" cy="6" r="2" fill="#e03030" /><circle cx="16" cy="6" r="2" fill="#e03030" /><circle cx="20" cy="6" r="2" fill="#e03030" /><circle cx="6" cy="11.500" r="2" fill="#68b878" /><circle cx="10" cy="11.500" r="2" fill="#68b878" /><circle cx="18" cy="11.500" r="2" fill="#68b878" /><circle cx="6" cy="17" r="2" fill="#4a82c0" /><circle cx="12" cy="17" r="2" fill="#4a82c0" /><circle cx="18" cy="17" r="2" fill="#4a82c0" /></g>
            </ToolBtn>
          </div>
          <div className="flex h-[791px] shrink-0 flex-col border border-[#b4b0ab]">
            <div className="flex h-[775px] shrink-0">
              <div className="flex w-[653px] shrink-0 flex-col overflow-hidden border-r border-[#b4b0ab] bg-[#ffffc7]">
                <div className={`flex h-[19px] w-[653px] shrink-0 border-b border-[#a9a5a5] ${headGrad}`}>
                  <div className="flex w-[45px] shrink-0 items-center border-r border-[#c3bfbf] pl-[10px]">
                    <span className="w-[22px] pt-[2px]">Id</span>
                    <svg width="8" height="5" viewBox="0 0 8 5"><path d="M0 0h8L4 4.500z" fill="#555" /></svg>
                  </div>
                  {cols.map(([c, w]) => (
                    <div key={c} className={`flex shrink-0 items-center justify-center border-r border-[#c3bfbf] pt-[2px] ${w}`}>{c}</div>
                  ))}
                  <div className="flex w-[60px] items-center justify-center pl-[2px] pt-[2px]">WMS</div>
                </div>
                {fields.map((f, n) => (
                  <div key={n} className="flex h-[30px] w-[653px] shrink-0">
                    <div className="flex w-[45px] shrink-0 border-b border-r border-[#c3bfbf] pl-[2px] pt-[8px]">
                      <span className={`w-[23px] pt-[2px] text-[8px] font-bold leading-[8px] text-[#555] ${f.kind === '1.2' ? 'tracking-[1px]' : ''}`}>{f.kind}</span>
                      {n}
                    </div>
                    {f.cells.map((c, i) => (
                      <div key={i} className={`shrink-0 whitespace-nowrap border-b border-r border-[#c3bfbf] pl-[3px] pt-[8px] ${cols[i][1]}`}>{c}</div>
                    ))}
                    <div className="flex-1 border-b border-[#c3bfbf] pl-[3px] pt-[7px]"><Check /></div>
                  </div>
                ))}
                <div className="flex flex-1">
                  <div className="w-[45px] border-r border-[#c3bfbf]" />
                  {cols.map(([c, w]) => <div key={c} className={`border-r border-[#c3bfbf] ${w}`} />)}
                </div>
              </div>
              <div className="flex flex-1 flex-col bg-[#e3e2df]">
                <ArrowBtn dir="up" className="h-[14px] border-b" />
                <div className="h-[398px] border-b border-[#b4b0ab] bg-gradient-to-r from-white to-[#efedeb]" />
                <div className="flex-1" />
                <ArrowBtn dir="down" className="h-[14px] border-t" />
              </div>
            </div>
            <div className="flex flex-1 border-t border-[#b4b0ab] bg-[#e3e2df]">
              <ArrowBtn dir="left" className="w-[14px] border-r" />
              <div className="w-[500px] border-r border-[#b4b0ab] bg-gradient-to-b from-white to-[#efedeb]" />
              <div className="flex-1" />
              <ArrowBtn dir="right" className="w-[15px] border-x" />
              <div className="w-[13px] bg-[#efebe7]" />
            </div>
          </div>
          <div className="flex flex-1 items-start gap-[6px] pt-[6px]">
            <div className="flex h-[24px] w-[80px] items-center rounded-[3px] border border-[#aeaaa6] bg-gradient-to-b from-[#fefefe] to-[#edebe8] pl-[17px]">
              <span className="w-[50px] pt-[2px]">Style</span>
              <svg width="7" height="4" viewBox="0 0 7 4"><path d="M0 0h7L3.500 4z" fill="#555" /></svg>
            </div>
            <div className="flex-1" />
            <PushBtn label="OK" main><path d="M15 1h8v14H12v5L1 12l10-9v5h4z" fill="#5b7a50" stroke="#354a2e" /><path d="M6 22h17" stroke="#aaa" strokeWidth="2" opacity=".5" /></PushBtn>
            <PushBtn label="Cancel"><path d="M4 2l15 19M19 2L3 22" stroke="#5e1a20" strokeWidth="5" /><path d="M5 3l13 17M18 3L4 21" stroke="#a83a44" strokeWidth="3" /></PushBtn>
            <PushBtn label="Apply"><path d="M1 13l5-2 3.500 5L20 2l3 0-13 21z" fill="#6d9560" stroke="#405a36" /></PushBtn>
            <PushBtn label="Help"><circle cx="12" cy="12" r="8" stroke="#e9e9e7" strokeWidth="6" /><circle cx="12" cy="12" r="8.500" stroke="#e84a4a" strokeWidth="6" strokeDasharray="7.500 5.850" strokeDashoffset="-3" /><path d="M1 6V1h5M18 1h5v5M23 18v5h-5M6 23H1v-5" stroke="#e03a3a" strokeWidth="1.500" strokeDasharray="2 1.500" /></PushBtn>
          </div>
        </div>
      </div>
    </div>
  );
}

export default function App() {
  return (
    <div className="relative flex h-[991px] w-[1461px] overflow-hidden bg-[#efebe7] font-['DejaVu_Sans',sans-serif] text-[12px] leading-[14px] text-black">
      <div className="flex w-[632px] shrink-0 flex-col">
        <MainToolbars />
        <div className="flex min-h-0 flex-1">
          <Docks />
          <div className="w-[6px] pl-[2px] pt-[434px]"><Dots className="w-[3px]" /></div>
          <div className="mt-px flex-1 overflow-hidden border-l border-t border-[#b4b0ab] bg-white">
            <CountyMap />
          </div>
        </div>
      </div>
      <div className="w-[6px] shrink-0 bg-[#222]" />
      <VotesTable />
      <div className="w-[6px] shrink-0 bg-[#222]" />
      <PrecinctTable />
      <Dialog />
    </div>
  );
}
